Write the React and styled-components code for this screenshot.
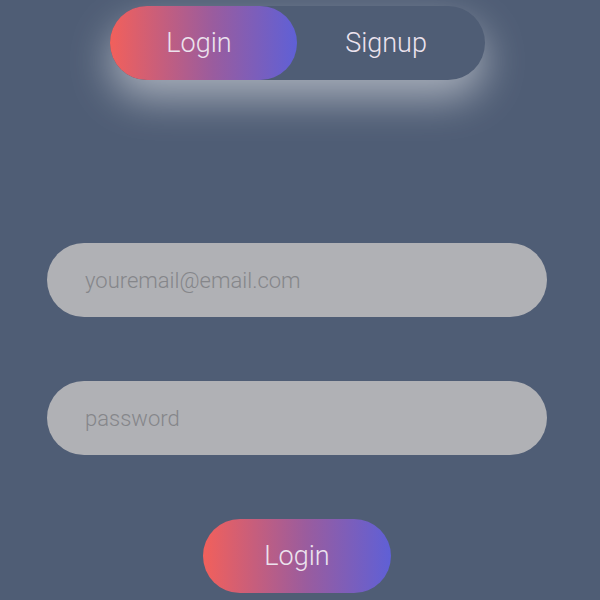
import React, { useState } from "react";
import styled, { createGlobalStyle } from "styled-components";

const GlobalStyle = createGlobalStyle`
  html, body {
    margin: 0;
    padding: 0;
    background: #4f5d75;
    font-family: Roboto, "Liberation Sans", sans-serif;
  }
`;

const GRADIENT = "linear-gradient(90deg, #f2605b 0%, #9a5c9e 55%, #5f60d6 100%)";

const Page = styled.div`
  width: 594px;
  height: 600px;
  display: flex;
  flex-direction: column;
  align-items: center;
  padding-top: 6px;
  box-sizing: border-box;
`;

const Toggle = styled.div`
  width: 375px;
  height: 74px;
  border-radius: 37px;
  background: #4f5d75;
  display: flex;
  box-shadow: 0 18px 42px rgba(255, 255, 255, 0.5);
`;

const Tab = styled.button`
  width: 187px;
  height: 74px;
  border: none;
  border-radius: 37px;
  background: ${(p) => (p.$active ? GRADIENT : "transparent")};
  color: #ece3ee;
  font-family: Roboto, "Liberation Sans", sans-serif;
  font-weight: 300;
  font-size: 27px;
  cursor: pointer;
  padding: 0 8px 0 0;
`;

const Form = styled.form`
  margin-top: 163px;
  display: flex;
  flex-direction: column;
  align-items: center;
  gap: 64px;
`;

const Input = styled.input`
  width: 500px;
  height: 74px;
  box-sizing: border-box;
  border: none;
  border-radius: 37px;
  background: #b0b1b5;
  padding: 0 38px;
  font-family: Roboto, "Liberation Sans", sans-serif;
  font-weight: 300;
  font-size: 22px;
  color: #555;
  outline: none;

  &::placeholder {
    color: #85868a;
  }
`;

const Submit = styled.button`
  width: 188px;
  height: 74px;
  border: none;
  border-radius: 37px;
  background: ${GRADIENT};
  color: #ece3ee;
  font-family: Roboto, "Liberation Sans", sans-serif;
  font-weight: 300;
  font-size: 27px;
  cursor: pointer;
`;

export default function App() {
  const [mode, setMode] = useState("login");

  return (
    <>
      <GlobalStyle />
      <Page>
        <Toggle>
          <Tab $active={mode === "login"} onClick={() => setMode("login")}>
            Login
          </Tab>
          <Tab $active={mode === "signup"} onClick={() => setMode("signup")}>
            Signup
          </Tab>
        </Toggle>
        <Form onSubmit={(e) => e.preventDefault()}>
          <Input type="email" placeholder="youremail@email.com" />
          <Input type="password" placeholder="password" />
          <Submit type="submit">Login</Submit>
        </Form>
      </Page>
    </>
  );
}
